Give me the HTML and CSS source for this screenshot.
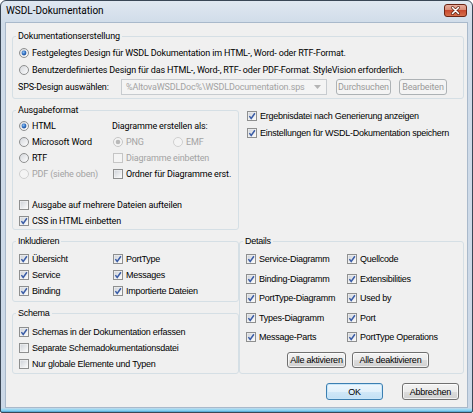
FILE: index.html
```html
<!DOCTYPE html>
<html>
<head>
<meta charset="utf-8">
<title>WSDL-Dokumentation</title>
<link rel="stylesheet" href="styles.css">
</head>
<body>
<svg class="defs" width="0" height="0" aria-hidden="true">
  <defs>
    <linearGradient id="gcb" x1="0" y1="0" x2="1" y2="1">
      <stop offset="0" stop-color="#cfd3d9"/>
      <stop offset="1" stop-color="#fbfbfb"/>
    </linearGradient>
    <linearGradient id="grd" x1="0" y1="0" x2="1" y2="1">
      <stop offset="0" stop-color="#d2d5da"/>
      <stop offset="1" stop-color="#ffffff"/>
    </linearGradient>
    <radialGradient id="gdot" cx="0.4" cy="0.35" r="0.7">
      <stop offset="0" stop-color="#8fc2f0"/>
      <stop offset="0.6" stop-color="#2d6bc0"/>
      <stop offset="1" stop-color="#1b4a8c"/>
    </radialGradient>
    <linearGradient id="gclose" x1="0" y1="0" x2="0" y2="1">
      <stop offset="0" stop-color="#eab1a2"/>
      <stop offset="0.45" stop-color="#d98d78"/>
      <stop offset="0.5" stop-color="#c8492e"/>
      <stop offset="1" stop-color="#d8734f"/>
    </linearGradient>
    <symbol id="cbOn" viewBox="0 0 10 10">
      <rect x="0.5" y="0.5" width="9" height="9" fill="#f6f6f6" stroke="#8e8f8f"/>
      <rect x="1.5" y="1.5" width="7" height="7" fill="url(#gcb)"/>
      <path d="M2.4 5.1 L4.2 7.4 L7.9 2.3" fill="none" stroke="#3a5ca6" stroke-width="1.5"/>
    </symbol>
    <symbol id="cbOff" viewBox="0 0 10 10">
      <rect x="0.5" y="0.5" width="9" height="9" fill="#f6f6f6" stroke="#8e8f8f"/>
      <rect x="1.5" y="1.5" width="7" height="7" fill="url(#gcb)"/>
    </symbol>
    <symbol id="cbDis" viewBox="0 0 10 10">
      <rect x="0.5" y="0.5" width="9" height="9" fill="#f4f4f4" stroke="#c5c5c5"/>
    </symbol>
    <symbol id="rOn" viewBox="0 0 10 10">
      <circle cx="5" cy="5" r="4.5" fill="url(#grd)" stroke="#8e8f8f"/>
      <circle cx="5" cy="5" r="2.4" fill="url(#gdot)"/>
    </symbol>
    <symbol id="rOff" viewBox="0 0 10 10">
      <circle cx="5" cy="5" r="4.5" fill="url(#grd)" stroke="#8e8f8f"/>
    </symbol>
    <symbol id="rDisOn" viewBox="0 0 10 10">
      <circle cx="5" cy="5" r="4.5" fill="#f4f4f4" stroke="#c5c5c5"/>
      <circle cx="5" cy="5" r="2.3" fill="#b9b9b9"/>
    </symbol>
    <symbol id="rDisOff" viewBox="0 0 10 10">
      <circle cx="5" cy="5" r="4.5" fill="#f4f4f4" stroke="#cfcfcf"/>
    </symbol>
  </defs>
</svg>

<div class="window">
  <div class="titlebar">
    <span class="title">WSDL-Dokumentation</span>
    <span class="close">
      <svg width="23" height="13" viewBox="0 0 23 13">
        <rect x="0.5" y="0.5" width="22" height="12" rx="2.5" fill="url(#gclose)" stroke="#6b2414"/>
        <path d="M8.5 3.5 L14.5 9.5 M14.5 3.5 L8.5 9.5" stroke="#5a2010" stroke-width="3" stroke-linecap="round"/>
        <path d="M8.5 3.5 L14.5 9.5 M14.5 3.5 L8.5 9.5" stroke="#ffffff" stroke-width="1.6" stroke-linecap="round"/>
      </svg>
    </span>
  </div>

  <div class="client">
    <fieldset class="grp g-doc seg">
      <legend>Dokumentationserstellung</legend>
      <div class="gbody doc-body">
        <label class="opt h17"><svg class="ctl"><use href="#rOn"/></svg>Festgelegtes Design für WSDL Dokumentation im HTML-, Word- oder RTF-Format.</label>
        <label class="opt h17"><svg class="ctl"><use href="#rOff"/></svg>Benutzerdefiniertes Design für das HTML-, Word-, RTF- oder PDF-Format. StyleVision erforderlich.</label>
        <div class="sps-row">
          <span class="sps-label">SPS-Design auswählen:</span>
          <span class="combo">
            <span class="combo-text">%AltovaWSDLDoc%\WSDLDocumentation.sps</span>
            <svg class="combo-arrow" width="7" height="4" viewBox="0 0 7 4"><path d="M0 0 H7 L3.5 4 Z" fill="#b4b4b4"/></svg>
          </span>
          <span class="btn dis b-durch">Durchsuchen</span>
          <span class="btn dis b-bearb">Bearbeiten</span>
        </div>
      </div>
    </fieldset>

    <div class="mid">
      <fieldset class="grp g-out seg">
        <legend>Ausgabeformat</legend>
        <div class="gbody out-body">
          <div class="out-grid">
            <label class="opt"><svg class="ctl"><use href="#rOn"/></svg>HTML</label>
            <span class="opt">Diagramme erstellen als:</span>
            <label class="opt"><svg class="ctl"><use href="#rOff"/></svg>Microsoft Word</label>
            <div class="opt diag-fmt">
              <label class="opt dis fmt-png"><svg class="ctl"><use href="#rDisOn"/></svg>PNG</label>
              <label class="opt dis"><svg class="ctl"><use href="#rDisOff"/></svg>EMF</label>
            </div>
            <label class="opt"><svg class="ctl"><use href="#rOff"/></svg>RTF</label>
            <label class="opt dis sub"><svg class="ctl"><use href="#cbDis"/></svg>Diagramme einbetten</label>
            <label class="opt dis"><svg class="ctl"><use href="#rDisOff"/></svg>PDF (siehe oben)</label>
            <label class="opt sub"><svg class="ctl"><use href="#cbOff"/></svg>Ordner für Diagramme erst.</label>
          </div>
          <div class="out-extra">
            <label class="opt"><svg class="ctl"><use href="#cbOff"/></svg>Ausgabe auf mehrere Dateien aufteilen</label>
            <label class="opt"><svg class="ctl"><use href="#cbOn"/></svg>CSS in HTML einbetten</label>
          </div>
        </div>
      </fieldset>
      <div class="mid-right nar">
        <label class="opt h17"><svg class="ctl"><use href="#cbOn"/></svg>Ergebnisdatei nach Generierung anzeigen</label>
        <label class="opt h17"><svg class="ctl"><use href="#cbOn"/></svg>Einstellungen für WSDL-Dokumentation speichern</label>
      </div>
    </div>

    <div class="lower nar">
      <div class="lcol">
        <fieldset class="grp g-inc">
          <legend>Inkludieren</legend>
          <div class="gbody inc-body">
            <label class="opt"><svg class="ctl"><use href="#cbOn"/></svg>Übersicht</label>
            <label class="opt"><svg class="ctl"><use href="#cbOn"/></svg>PortType</label>
            <label class="opt"><svg class="ctl"><use href="#cbOn"/></svg>Service</label>
            <label class="opt"><svg class="ctl"><use href="#cbOn"/></svg>Messages</label>
            <label class="opt"><svg class="ctl"><use href="#cbOn"/></svg>Binding</label>
            <label class="opt"><svg class="ctl"><use href="#cbOn"/></svg>Importierte Dateien</label>
          </div>
        </fieldset>
        <fieldset class="grp g-sch">
          <legend>Schema</legend>
          <div class="gbody sch-body">
            <label class="opt"><svg class="ctl"><use href="#cbOn"/></svg>Schemas in der Dokumentation erfassen</label>
            <label class="opt"><svg class="ctl"><use href="#cbOff"/></svg>Separate Schemadokumentationsdatei</label>
            <label class="opt"><svg class="ctl"><use href="#cbOff"/></svg>Nur globale Elemente und Typen</label>
          </div>
        </fieldset>
      </div>
      <fieldset class="grp g-det">
        <legend>Details</legend>
        <div class="gbody det-body">
          <div class="det-grid">
            <label class="opt"><svg class="ctl"><use href="#cbOn"/></svg>Service-Diagramm</label>
            <label class="opt"><svg class="ctl"><use href="#cbOn"/></svg>Quellcode</label>
            <label class="opt"><svg class="ctl"><use href="#cbOn"/></svg>Binding-Diagramm</label>
            <label class="opt"><svg class="ctl"><use href="#cbOn"/></svg>Extensibilities</label>
            <label class="opt"><svg class="ctl"><use href="#cbOn"/></svg>PortType-Diagramm</label>
            <label class="opt"><svg class="ctl"><use href="#cbOn"/></svg>Used by</label>
            <label class="opt"><svg class="ctl"><use href="#cbOn"/></svg>Types-Diagramm</label>
            <label class="opt"><svg class="ctl"><use href="#cbOn"/></svg>Port</label>
            <label class="opt"><svg class="ctl"><use href="#cbOn"/></svg>Message-Parts</label>
            <label class="opt"><svg class="ctl"><use href="#cbOn"/></svg>PortType Operations</label>
          </div>
          <div class="det-buttons">
            <span class="btn b-all">Alle aktivieren</span>
            <span class="btn b-none">Alle deaktivieren</span>
          </div>
        </div>
      </fieldset>
    </div>

    <div class="footer nar">
      <span class="btn default b-ok">OK</span>
      <span class="btn b-cancel">Abbrechen</span>
    </div>
  </div>
</div>
</body>
</html>
```
FILE: styles.css
```css
html, body {
  margin: 0;
  padding: 0;
  background: #ffffff;
}

.defs {
  position: absolute;
  width: 0;
  height: 0;
  overflow: hidden;
}

.window {
  box-sizing: border-box;
  width: 473px;
  height: 413px;
  border: 1px solid #3a4756;
  border-radius: 6px 6px 2px 2px;
  padding: 0 4px 4px;
  background:
    linear-gradient(to top, #3f8fc0 0, #7ccbef 1px, #a6dcf3 3px, rgba(166, 220, 243, 0) 4px),
    linear-gradient(#e0e8f1, #d0dce9 22px, #cbd8e7);
  display: flex;
  flex-direction: column;
  color: #000;
}

.titlebar {
  height: 21px;
  flex: none;
  display: flex;
  justify-content: space-between;
  align-items: flex-start;
}

.title {
  font-family: Roboto, "Noto Sans", sans-serif;
  font-size: 10px;
  line-height: 12px;
  margin: 4px 0 0 1px;
}

.close {
  display: block;
  width: 23px;
  height: 13px;
  margin: 3px 1px 0 0;
}

.close svg {
  display: block;
}

.client {
  flex: 1;
  border: 1px solid #a9b9cb;
  background: #f0f0f0;
  padding: 7px 3px 0 6px;
  display: flex;
  flex-direction: column;
}

.seg {
  font-family: Roboto, "Noto Sans", sans-serif;
  font-size: 9px;
  letter-spacing: -0.15px;
}

.nar {
  font-family: "Liberation Sans", Arial, sans-serif;
  font-size: 9px;
  letter-spacing: -0.25px;
}

fieldset.grp {
  box-sizing: border-box;
  margin: 0;
  padding: 0;
  border: 1px solid #d5dfe5;
  border-radius: 3px;
  min-width: 0;
}

fieldset.grp legend {
  padding: 0 2px;
  margin-left: 3px;
  height: 12px;
  line-height: 12px;
}

.gbody {
  padding-left: 6px;
}

.opt {
  display: flex;
  align-items: center;
  height: 16px;
  white-space: nowrap;
}

.h17 {
  height: 17px;
}

.ctl {
  width: 10px;
  height: 10px;
  flex: none;
  margin-right: 3px;
}

.dis {
  color: #a3a3a3;
}

/* Dokumentationserstellung */
.doc-body {
  padding-top: 2px;
  padding-bottom: 2px;
}

.sps-row {
  display: flex;
  align-items: center;
  height: 18px;
}

.sps-label {
  width: 103px;
  margin-left: -1px;
  flex: none;
}

.combo {
  box-sizing: border-box;
  width: 206px;
  height: 16px;
  border: 1px solid #c7cbcf;
  background: #f4f4f4;
  display: flex;
  align-items: center;
  justify-content: space-between;
  padding: 0 5px 0 4px;
  color: #a3a3a3;
}

.combo-arrow {
  display: block;
}

.btn {
  box-sizing: border-box;
  height: 17px;
  border: 1px solid #707070;
  border-radius: 3px;
  background: linear-gradient(#f3f3f3 0%, #ebebeb 50%, #dddddd 50%, #d0d0d0 100%);
  display: inline-flex;
  align-items: center;
  justify-content: center;
  white-space: nowrap;
  box-shadow: inset 0 0 0 1px rgba(255, 255, 255, 0.7);
}

.btn.dis {
  border-color: #adb2b5;
  background: #f4f4f4;
  box-shadow: none;
  color: #9a9a9a;
  height: 16px;
}

.b-durch {
  width: 55px;
  margin-left: 9px;
}

.b-bearb {
  width: 48px;
  margin-left: 8px;
}

/* Ausgabeformat */
.mid {
  display: flex;
  margin-top: 5px;
}

.g-out {
  width: 227px;
  flex: none;
}

.out-body {
  padding-top: 2px;
}

.out-grid {
  display: grid;
  grid-template-columns: 93px auto;
}

.diag-fmt {
  padding-left: 1px;
}

.fmt-png {
  width: 60px;
}

.sub .ctl {
  margin-left: 1px;
}

.out-extra {
  margin-top: 15px;
}

.mid-right {
  padding: 3px 0 0 8px;
}

/* lower part */
.lower {
  display: flex;
  margin-top: 5px;
}

.lcol {
  width: 227px;
  flex: none;
  display: flex;
  flex-direction: column;
  gap: 5px;
}

.inc-body {
  display: grid;
  grid-template-columns: 94px auto;
  padding-top: 4px;
  padding-bottom: 2px;
}

.sch-body {
  padding-top: 5px;
  padding-bottom: 1px;
}

.g-det {
  flex: 1;
  margin-left: 1px;
}

.det-body {
  padding-top: 2.5px;
  padding-bottom: 5px;
}

.det-grid {
  display: grid;
  grid-template-columns: 101px auto;
  grid-auto-rows: 19.5px;
}

.det-grid .opt {
  height: 19.5px;
}

.det-buttons {
  display: flex;
  gap: 6px;
  margin: 5px 0 0 41px;
}

.det-buttons .btn {
  height: 16px;
}

.b-all {
  width: 59px;
}

.b-none {
  width: 77px;
}

/* footer */
.footer {
  display: flex;
  justify-content: flex-end;
  gap: 19px;
  margin-top: 9px;
  padding-right: 5px;
}

.b-ok,
.b-cancel {
  width: 57px;
}

.btn.default {
  border-color: #3c7fb1;
  background: linear-gradient(#eef7fd 0%, #e2f1fb 50%, #d1e8f8 50%, #c3e0f4 100%);
  box-shadow: inset 0 0 0 1px #c8e6f9;
}
```
